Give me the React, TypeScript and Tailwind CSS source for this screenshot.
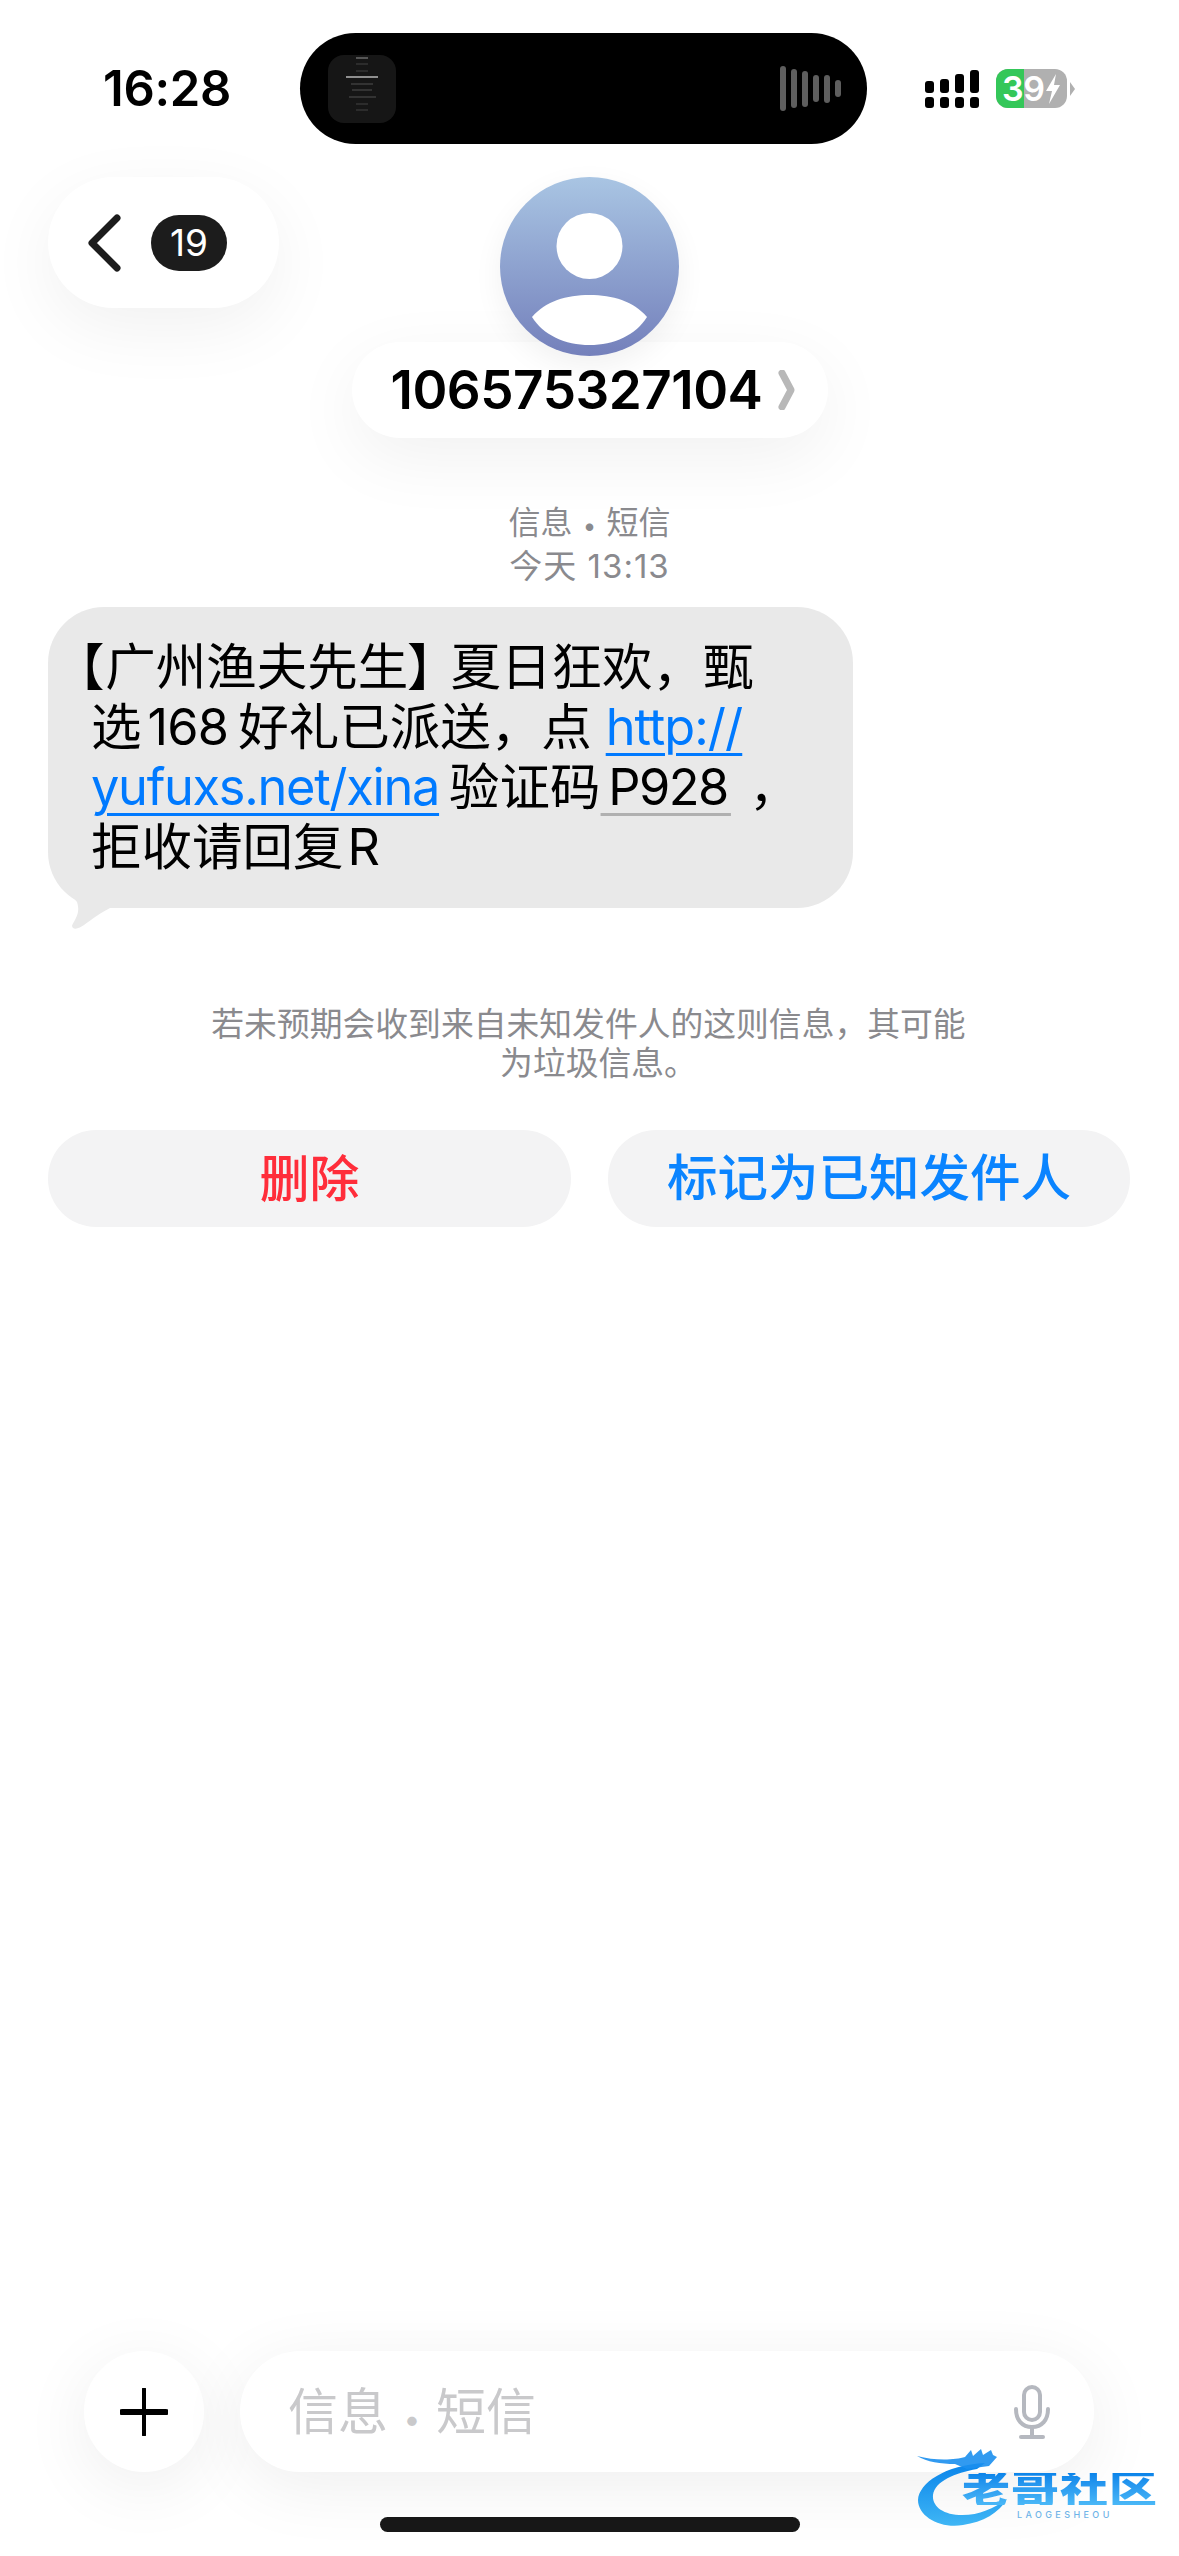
import React from "react";

const waveBars = [45, 39, 36, 27, 28, 17];
const thumbLines = [
  { w: 12, c: "bg-[#555555]" },
  { w: 12, c: "bg-[#2c2c2c]" },
  { w: 12, c: "bg-[#2c2c2c]" },
  { w: 32, c: "bg-[#8f8f8f]" },
  { w: 22, c: "bg-[#333333]" },
  { w: 20, c: "bg-[#333333]" },
  { w: 27, c: "bg-[#333333]" },
  { w: 12, c: "bg-[#2c2c2c]" },
  { w: 12, c: "bg-[#2c2c2c]" },
];
const signalBars = [12, 14, 19, 23];

function Signal() {
  return (
    <div className="flex gap-[6px]">
      {signalBars.map((h, i) => (
        <div key={i} className="flex flex-col items-center justify-end gap-[4px] w-[9px] h-[39px]">
          <div className="w-[9px] rounded-[3px] bg-black" style={{ height: h }} />
          <div className="w-[9px] h-[11px] rounded-[3px] bg-black" />
        </div>
      ))}
    </div>
  );
}

function Battery() {
  return (
    <div className="flex items-center gap-[3px]">
      <div className="relative w-[71px] h-[39px] rounded-[12px] overflow-hidden bg-[#b0b0b0] flex">
        <div className="w-[28px] h-full bg-[#34c759]" />
        <div className="absolute inset-0 flex items-center pl-[6px] text-white text-[34px] font-semibold leading-none tracking-[-0.5px]">
          39
          <svg width="16" height="30" viewBox="0 0 16 30" className="ml-[1px]">
            <path d="M11 0 L1 17 H7 L4 30 L15 11 H9 Z" fill="#ffffff" />
          </svg>
        </div>
      </div>
      <svg width="5" height="14" viewBox="0 0 5 14">
        <path d="M0 0 L5 7 L0 14 Z" fill="#b0b0b0" />
      </svg>
    </div>
  );
}

function Island() {
  return (
    <div className="w-[567px] h-[111px] rounded-[56px] bg-black flex items-center justify-between pl-[28px] pr-[26px]">
      <div className="w-[68px] h-[68px] rounded-[16px] bg-[#161616] flex flex-col items-center gap-[4.6px] pt-[2px] overflow-hidden">
        {thumbLines.map((l, i) => (
          <div key={i} className={`h-[2px] ${l.c}`} style={{ width: l.w }} />
        ))}
      </div>
      <div className="flex items-center gap-[5px]">
        {waveBars.map((h, i) => (
          <div key={i} className="w-[6px] rounded-full bg-[#5e5e5e]" style={{ height: h }} />
        ))}
      </div>
    </div>
  );
}

function Avatar() {
  return (
    <div className="relative z-10 w-[179px] h-[179px] rounded-full overflow-hidden bg-gradient-to-b from-[#a9c5e3] to-[#7480bb] shadow-[0_10px_30px_rgba(0,0,0,0.06)]">
      <svg width="179" height="179" viewBox="0 0 179 179">
        <circle cx="89.5" cy="69" r="33" fill="#ffffff" />
        <path d="M32 140 C46 124 66 118 89.5 118 C113 118 133 124 147 140 C136 158 114 168 89.5 168 C65 168 43 158 32 140 Z" fill="#ffffff" />
      </svg>
    </div>
  );
}

function Watermark() {
  return (
    <div className="absolute left-[915px] top-[2445px] w-[250px] h-[85px]">
      <svg width="100" height="85" viewBox="0 0 100 85" className="absolute left-0 top-0">
        <defs>
          <linearGradient id="dragon" x1="0" y1="0" x2="0" y2="1">
            <stop offset="0" stopColor="#0a84ea" />
            <stop offset="1" stopColor="#3fb6f5" />
          </linearGradient>
        </defs>
        <path d="M70 18 C30 20 4 38 3 55 C3 72 26 84 48 80 C68 77 84 68 92 54 C78 64 62 71 44 70 C26 69 17 60 18 50 C20 36 40 28 62 24 Z" fill="url(#dragon)" />
        <path d="M2 11 C20 16 40 15 50 12 L56 5 L58 11 L66 4 L68 10 L76 5 L78 10 L82 12 L74 21 L52 24 L40 19 C26 19 12 17 2 11 Z" fill="#1b8fee" opacity="0.9" />
      </svg>
      <div className="absolute left-[47px] top-[28px] w-[200px] text-[48px] leading-[40px] font-black tracking-[1px] whitespace-nowrap scale-y-[0.8] origin-top bg-gradient-to-b from-[#0a84ea] to-[#4ab8f7] bg-clip-text text-transparent">
        老哥社区
      </div>
      <div className="absolute left-[102px] top-[65px] text-[9px] leading-[9px] tracking-[3.4px] font-medium text-[#6fb4e8] whitespace-nowrap">
        LAOGESHEOU
      </div>
    </div>
  );
}

export default function App() {
  return (
    <div className="relative w-[1179px] h-[2556px] bg-white overflow-hidden flex flex-col font-['Inter','Noto_Sans_CJK_SC',sans-serif] text-black">
      {/* status bar */}
      <div className="grid grid-cols-[300px_567px_1fr] pt-[33px] items-center">
        <div className="pl-[103px] text-[49px] leading-none font-semibold tracking-[-0.3px]">16:28</div>
        <Island />
        <div className="flex items-center pl-[58px] gap-[17px]">
          <Signal />
          <Battery />
        </div>
      </div>

      {/* header */}
      <div className="relative mt-[33px] flex flex-col items-center">
        <div className="absolute left-[48px] top-0 w-[231px] h-[131px] rounded-[66px] bg-white shadow-[0_20px_70px_rgba(0,0,0,0.06)] flex items-center pl-[38px] gap-[29px]">
          <svg width="36" height="58" viewBox="0 0 36 58" fill="none">
            <path d="M31 4 L6 29 L31 54" stroke="#1c1c1c" strokeWidth="7" strokeLinecap="round" strokeLinejoin="round" />
          </svg>
          <div className="w-[76px] h-[56px] rounded-[28px] bg-[#1c1c1c] text-white text-[37px] leading-none flex items-center justify-center">19</div>
        </div>
        <Avatar />
        <div className="relative -mt-[14px] w-[476px] h-[96px] rounded-[48px] bg-white shadow-[0_20px_70px_rgba(0,0,0,0.06)] flex items-center pl-[39px] gap-[14px]">
          <span className="text-[53px] leading-none font-semibold tracking-[-0.5px]">106575327104</span>
          <svg width="22" height="40" viewBox="0 0 22 40" fill="none">
            <path d="M6 3 L15 20 L6 37" stroke="#b8b8b8" strokeWidth="7" strokeLinecap="round" strokeLinejoin="round" />
          </svg>
        </div>
      </div>

      {/* meta */}
      <div className="mt-[64px] text-center text-[32px] leading-[41px] text-[#8a8a8e]">
        <div>
          信息<span className="inline-block w-[34px] text-[24px]">•</span>短信
        </div>
        <div className="text-[33px] tracking-[1px]">今天 13:13</div>
      </div>

      {/* bubble */}
      <div className="relative ml-[48px] mt-[20px] w-[805px] h-[301px] rounded-[56px] bg-[#e9e9e9] pl-[43px] pt-[30px] text-[50.5px] leading-[60px] whitespace-nowrap">
        <svg width="90" height="90" viewBox="0 0 90 90" className="absolute left-0 bottom-[-42px]">
          <path d="M2 0 C6 20 20 30 29 42 C33 54 26 60 24 66 C25 71 32 68 36 65 C44 59 54 52 62 48 L62 0 Z" fill="#e9e9e9" />
        </svg>
        <div className="relative">
          <div>
            <span className="-ml-[13px] mr-[2px] [font-feature-settings:'palt']">【</span>广州渔夫先生<span className="mr-[17px] [font-feature-settings:'palt']">】</span>夏日狂欢，甄
          </div>
          <div>
            选<span className="ml-[6px] mr-[10px] tracking-[-0.8px]">168</span>好礼已派送，点<span className="ml-[14px] tracking-[-1px] text-[#007aff] underline decoration-[3px] underline-offset-[8px]">http://</span>
          </div>
          <div>
            <span className="tracking-[-1.3px] text-[#007aff] underline decoration-[3px] underline-offset-[8px]">yufuxs.net/xina</span>
            <span className="ml-[10px]">验证码</span>
            <span className="tracking-[-1.5px] underline decoration-[#b0b0b0] decoration-[3px] underline-offset-[8px]">{"\u2009P928\u200A"}</span>
            <span className="ml-[18px]">，</span>
          </div>
          <div>
            拒收请回复<span className="ml-[4px]">R</span>
          </div>
        </div>
      </div>

      {/* notice */}
      <div className="mt-[97px] text-center text-[32.8px] leading-[39px] text-[#8a8a8e]">
        <div className="pr-[2px]">若未预期会收到来自未知发件人的这则信息，其可能</div>
        <div className="pl-[18px]">为垃圾信息。</div>
      </div>

      {/* actions */}
      <div className="mt-[47px] ml-[48px] mr-[49px] flex gap-[37px]">
        <button className="w-[523px] h-[97px] rounded-[48px] bg-[#f3f3f4] text-[50px] leading-none font-medium text-[#ff2d3a]">删除</button>
        <button className="flex-1 h-[97px] rounded-[48px] bg-[#f3f3f4] text-[50.5px] leading-none font-medium text-[#0a84ff]">标记为已知发件人</button>
      </div>

      {/* composer */}
      <div className="mt-auto pl-[84px] pr-[85px] flex gap-[36px]">
        <div className="w-[120px] h-[121px] rounded-full bg-white shadow-[0_14px_70px_rgba(0,0,0,0.07)] flex items-center justify-center">
          <svg width="48" height="48" viewBox="0 0 48 48" fill="none">
            <path d="M24 1 V47" stroke="#000" strokeWidth="4" strokeLinecap="round" />
            <path d="M2 24 H46" stroke="#000" strokeWidth="6" strokeLinecap="round" />
          </svg>
        </div>
        <div className="flex-1 h-[121px] rounded-[60px] bg-white shadow-[0_14px_70px_rgba(0,0,0,0.07)] flex items-center justify-between pl-[48px] pr-[44px]">
          <span className="text-[50px] leading-none text-[#c9c9cb]">
            信息<span className="inline-block w-[48px] text-center text-[30px]">•</span>短信
          </span>
          <svg width="36" height="54" viewBox="0 0 36 54" fill="none" stroke="#b5b8bf" strokeWidth="4" strokeLinecap="round">
            <rect x="10" y="2" width="16" height="33" rx="8" />
            <path d="M2 24 C2 35 8 42 18 42 C28 42 34 35 34 24" />
            <path d="M18 42 V51" />
            <path d="M7 52 H29" strokeWidth="4" />
          </svg>
        </div>
      </div>

      {/* home indicator */}
      <div className="mt-[45px] mb-[24px] mx-auto w-[420px] h-[15px] rounded-full bg-[#171717]" />

      <Watermark />
    </div>
  );
}
